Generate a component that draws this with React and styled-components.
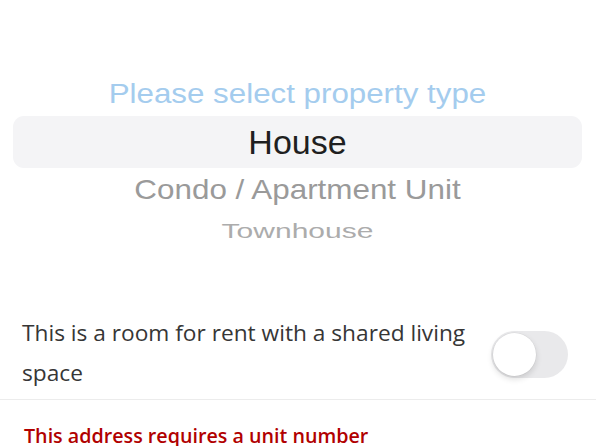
import React, { useState } from "react";
import styled, { createGlobalStyle } from "styled-components";

const GlobalStyle = createGlobalStyle`
  html, body {
    margin: 0;
    padding: 0;
    background: #ffffff;
  }
  * {
    box-sizing: border-box;
  }
`;

const options = [
  { label: "Please select property type", tone: "placeholder", height: 44, size: 31.3, squash: 0.87 },
  { label: "House", tone: "selected", height: 52, size: 34, squash: 1 },
  { label: "Condo / Apartment Unit", tone: "near", height: 44, size: 31.4, squash: 0.88 },
  { label: "Townhouse", tone: "far", height: 38, size: 30, squash: 0.7 },
];

const toneColors = {
  placeholder: "#a4ccee",
  selected: "#1f1f21",
  near: "#9a9a9a",
  far: "#acacac",
};

function App() {
  const [shared, setShared] = useState(false);

  return (
    <Page>
      <GlobalStyle />
      <Picker>
        {options.map((o) => (
          <PickerRow key={o.label} $height={o.height} $selected={o.tone === "selected"}>
            <PickerLabel $tone={o.tone} $size={o.size} $squash={o.squash}>
              {o.label}
            </PickerLabel>
          </PickerRow>
        ))}
      </Picker>

      <ToggleRow>
        <ToggleText>This is a room for rent with a shared living space</ToggleText>
        <Switch onClick={() => setShared(!shared)} $on={shared}>
          <Knob $on={shared} />
        </Switch>
      </ToggleRow>

      <ErrorText>This address requires a unit number</ErrorText>
    </Page>
  );
}

export default App;

const Page = styled.div`
  width: 596px;
  height: 446px;
  overflow: hidden;
  padding-top: 72px;
  background: #ffffff;
`;

const Picker = styled.div`
  display: flex;
  flex-direction: column;
  padding: 0 14px 0 13px;
  font-family: "Liberation Sans", Arial, sans-serif;
`;

const PickerRow = styled.div`
  display: flex;
  align-items: center;
  justify-content: center;
  height: ${(p) => p.$height}px;
  border-radius: 11px;
  background: ${(p) => (p.$selected ? "#f4f4f6" : "transparent")};
`;

const PickerLabel = styled.span`
  display: inline-block;
  font-size: ${(p) => p.$size}px;
  line-height: 1;
  color: ${(p) => toneColors[p.$tone]};
  transform: scaleY(${(p) => p.$squash});
  white-space: nowrap;
`;

const ToggleRow = styled.div`
  display: flex;
  align-items: center;
  justify-content: space-between;
  margin-top: 63px;
  padding: 0 28px 6px 22px;
  border-bottom: 1px solid #ececec;
`;

const ToggleText = styled.p`
  margin: 0;
  width: 460px;
  font-family: "Open Sans", sans-serif;
  font-size: 22.7px;
  line-height: 40px;
  color: #363636;
`;

const Switch = styled.button`
  position: relative;
  flex-shrink: 0;
  width: 77px;
  height: 47px;
  margin-top: 2px;
  padding: 0;
  border: none;
  border-radius: 24px;
  background: ${(p) => (p.$on ? "#34c759" : "#e9e9eb")};
  cursor: pointer;
`;

const Knob = styled.span`
  position: absolute;
  top: 2px;
  left: ${(p) => (p.$on ? "32px" : "2px")};
  width: 43px;
  height: 43px;
  border-radius: 50%;
  background: #ffffff;
  box-shadow: 0 3px 6px rgba(0, 0, 0, 0.14), 0 0 0 0.5px rgba(0, 0, 0, 0.06);
`;

const ErrorText = styled.p`
  margin: 22px 0 0 24px;
  font-family: "Open Sans", sans-serif;
  font-weight: 600;
  font-size: 19.7px;
  line-height: 28px;
  color: #b10000;
`;
